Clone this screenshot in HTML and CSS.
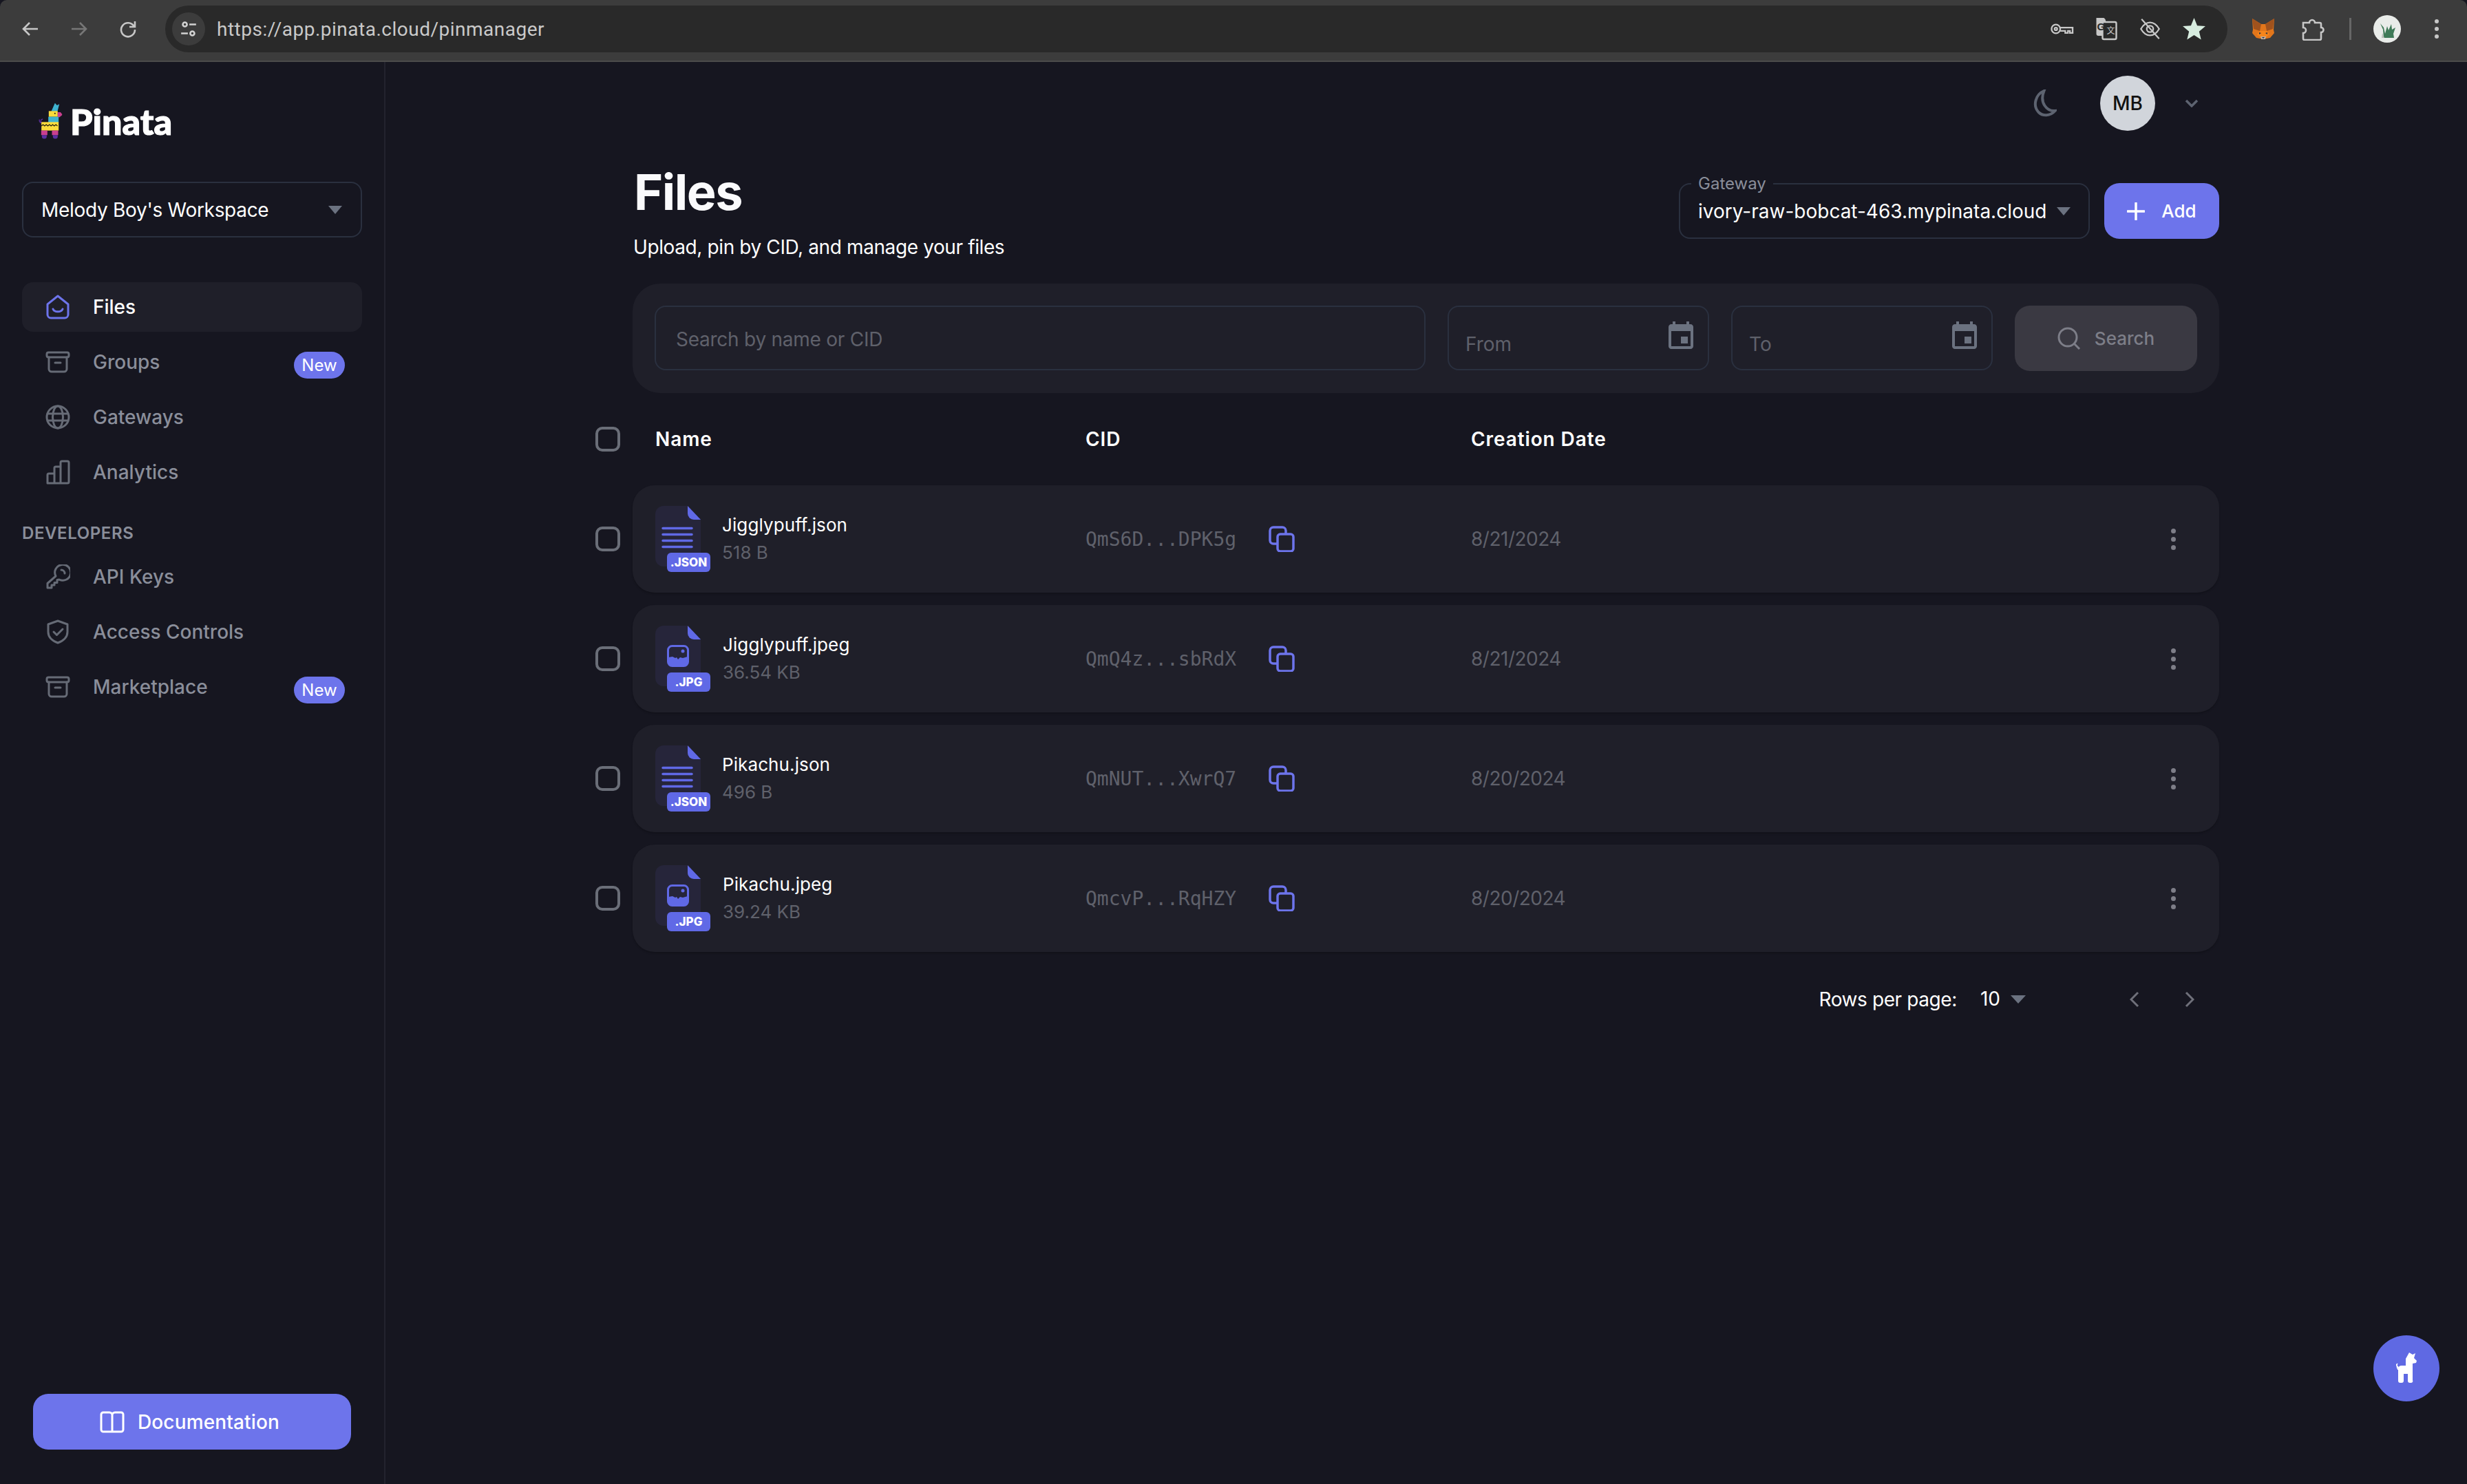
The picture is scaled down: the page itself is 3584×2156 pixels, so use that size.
FILE: index.html
```html
<!DOCTYPE html>
<html lang="en">
    <head>
        <meta charset="UTF-8">
        <meta name="viewport" content="width=device-width, initial-scale=1.0">
        <title>Pinata - Files</title>
        <link rel="stylesheet" href="styles.css">
    </head>
    <body>
        <svg class="defs" width="0" height="0">
            <symbol id="i-box" viewBox="0 0 36 36"><rect x="2" y="4" width="32" height="7" rx="2.5"/><path d="M5 11v17a4 4 0 0 0 4 4h18a4 4 0 0 0 4-4V11M14 19h8"/></symbol>
            <symbol id="i-copy" viewBox="0 0 38 38"><path d="M25 12V7a5 5 0 0 0-5-5H7a5 5 0 0 0-5 5v14a5 5 0 0 0 5 5h5"/><rect x="13" y="12" width="23" height="25" rx="4"/></symbol>
            <symbol id="i-event" viewBox="0 0 24 24"><path d="M17 12h-5v5h5v-5zM16 1v2H8V1H6v2H5c-1.110 0-1.990.9-1.990 2L3 19c0 1.100.89 2 2 2h14c1.100 0 2-.9 2-2V5c0-1.100-.9-2-2-2h-1V1h-2zm3 18H5V8h14v11z"/></symbol>
            <symbol id="i-doc" viewBox="0 0 66 88"><path fill="#26253a" d="M12 0h34l20 20v56a12 12 0 0 1-12 12H12A12 12 0 0 1 0 76V12A12 12 0 0 1 12 0z"/><path fill="#6069e6" d="M47 0l19 20H56a9 9 0 0 1-9-9z"/></symbol>
            <symbol id="i-img" viewBox="0 0 32 32"><rect x="1.500" y="1.500" width="29" height="29" rx="6" fill="none" stroke="#6069e6" stroke-width="3"/><path fill="#6069e6" d="M2 18l6-1 4 2 2-1 2 3 3-3 4 1 7-2v9a5 5 0 0 1-5 5H7a5 5 0 0 1-5-5z"/><circle cx="23" cy="9" r="2.500" fill="#6069e6"/></symbol>
            <symbol id="i-lines" viewBox="0 0 46 32"><path d="M2 2.500h42M2 11.500h42M2 20.500h42M2 29.500h42" fill="none" stroke="#6069e6" stroke-width="3.500" stroke-linecap="round"/></symbol>
        </svg>

        <header class="toolbar">
            <svg class="tb-icon" viewBox="0 0 28 28"><path d="M25 14H4M13 5l-9 9 9 9"/></svg>
            <svg class="tb-icon tb-icon--off" viewBox="0 0 28 28"><path d="M3 14h21M15 5l9 9-9 9"/></svg>
            <svg class="tb-icon" viewBox="0 0 28 28"><path d="M22.500 10A10 10 0 1 0 24 15M24 3v8h-8"/></svg>
            <div class="omnibox">
                <span class="site-chip">
                    <svg viewBox="0 0 24 24"><circle cx="7" cy="6" r="2.800"/><path d="M13 6h9M2 18h9"/><circle cx="17" cy="18" r="2.800"/></svg>
                </span>
                <span class="url">https://app.pinata.cloud/pinmanager</span>
                <span class="omni-icons">
                    <svg viewBox="0 0 36 24"><circle cx="9" cy="12" r="6.500"/><circle cx="9" cy="12" r="2" /><path d="M15.500 10H34v8h-4v-3h-3v3h-4v-3h-7.500"/></svg>
                    <svg viewBox="0 0 34 34" class="translate"><path class="solid" d="M3 1h11l2 2 6 24H6a3 3 0 0 1-3-3z"/><rect class="outline" x="12" y="7" width="20" height="25" rx="2"/><text x="4" y="19" class="tr-g">G</text><text x="18" y="24" class="tr-x">文</text></svg>
                    <svg viewBox="0 0 36 36"><path d="M4 18c4-7 9-10 14-10s10 3 14 10c-4 7-9 10-14 10S8 25 4 18z"/><circle cx="18" cy="18" r="5"/><path d="M5 3l27 30"/></svg>
                    <svg viewBox="0 0 32 32"><path class="star" d="M16 1l4.300 10.500 11.200.8-8.600 7.200 2.700 11L16 24.500 6.400 30.500l2.700-11L.5 12.300l11.200-.8z"/></svg>
                </span>
            </div>
            <div class="tb-right">
                <svg class="fox" viewBox="0 0 32 30"><path fill="#e2761b" d="M0 0l13 8h6L32 0l-1 16 1 5-6 7-5 1H11l-5-1-6-7 1-5z"/><path fill="#a0521d" d="M0 0l13 8-2 10-9-3zM32 0L19 8l2 10 9-3z"/><path fill="#f6851b" d="M11 18h10l4 5-5 4h-8l-5-4z"/><path fill="#c0ad9e" d="M12 26h8l-1 4h-6z"/><path fill="#233447" d="M10 20l3 1-3 2zM22 20l-3 1 3 2zM14 27h4l-2 2z"/></svg>
                <svg class="puzzle" viewBox="0 0 34 34"><path d="M3 8h9a4 4 0 0 1 8 0h7a2 2 0 0 1 2 2v5a3.500 3.500 0 0 1 0 7v9a2 2 0 0 1-2 2H5a2 2 0 0 1-2-2v-8a4 4 0 0 0 0-8z"/></svg>
                <span class="tb-sep"></span>
                <span class="profile">
                    <svg viewBox="0 0 40 40"><circle cx="20" cy="20" r="20" fill="#e9ece9"/><path fill="#3f7a58" d="M10 12l5 6 2 9 3-11 2 6 4-9 1 8 5-3-3 9 1 6H15l-1-12z"/><path fill="#b9bdb9" d="M13 26l3 7h-4z"/></svg>
                </span>
                <span class="kebab"><i></i><i></i><i></i></span>
            </div>
        </header>

        <div class="app">
            <aside class="sidebar">
                <div class="logo">
                    <svg class="llama" viewBox="45 55 110 165">
                        <path fill="none" stroke="#5b2fa0" stroke-width="4" d="M62 150c-8-10-6-18 4-20M58 148c-7-6-8-12-6-16"/>
                        <path fill="#3fb3d0" d="M103 96l16-36 9 10 10-5-8 31z"/>
                        <rect fill="#fbdc3c" x="92" y="95" width="39" height="25"/>
                        <path fill="#c93f8f" d="M131 100h12l7 8v5l-11 9h-8z"/>
                        <circle cx="119" cy="105" r="3" fill="#1a1a1a"/>
                        <rect fill="#3fb3d0" x="90" y="120" width="45" height="25"/>
                        <rect fill="#fbdc3c" x="60" y="143" width="75" height="37"/>
                        <path fill="none" stroke="#1d1a10" stroke-width="3.500" d="M60 160l7-6 7 6 7-6 7 6 7-6 7 6 7-6 7 6 7-6 7 6"/>
                        <rect fill="#c93f8f" x="59" y="180" width="27" height="20"/>
                        <rect fill="#c93f8f" x="106" y="180" width="27" height="20"/>
                        <path fill="#5b2fa0" d="M62 200h21v7a10 8 0 0 1-21 0zM110 200h21v7a10 8 0 0 1-21 0z"/>
                    </svg>
                    <span class="logo-word">Pinata</span>
                </div>

                <div class="select workspace">
                    <span>Melody Boy's Workspace</span>
                    <i class="caret"></i>
                </div>

                <nav class="nav">
                    <a class="nav-item active">
                        <svg class="nav-icon" viewBox="0 0 36 36"><path d="M3 14L18 2l15 12v15a5 5 0 0 1-5 5H8a5 5 0 0 1-5-5z"/><path d="M11 21c2 5 12 5 14 0"/></svg>
                        Files
                    </a>
                    <a class="nav-item">
                        <svg class="nav-icon"><use href="#i-box"/></svg>
                        Groups
                        <span class="badge">New</span>
                    </a>
                    <a class="nav-item">
                        <svg class="nav-icon" viewBox="0 0 36 36"><circle cx="18" cy="18" r="16"/><ellipse cx="18" cy="18" rx="7.500" ry="16"/><path d="M3 13h30M3 23h30"/></svg>
                        Gateways
                    </a>
                    <a class="nav-item">
                        <svg class="nav-icon" viewBox="0 0 36 36"><path d="M3 34V22a2 2 0 0 1 2-2h8V12a2 2 0 0 1 2-2h7V4a2 2 0 0 1 2-2h8a2 2 0 0 1 2 2v28a2 2 0 0 1-2 2zM13 20v14M22 10v24"/></svg>
                        Analytics
                    </a>
                </nav>

                <div class="nav-label">DEVELOPERS</div>

                <nav class="nav nav--dev">
                    <a class="nav-item">
                        <svg class="nav-icon" viewBox="0 0 36 36"><path d="M15 17a11.500 11.500 0 1 1 5 5l-3 .5v4h-4v3.500H9V34H3v-6.500z"/><path d="M23 8a5 5 0 0 1 5 5"/></svg>
                        API Keys
                    </a>
                    <a class="nav-item">
                        <svg class="nav-icon" viewBox="0 0 36 36"><path d="M18 2l14 5v11c0 8-6 13-14 16C10 31 4 26 4 18V7z"/><path d="M12 18l4.500 4.500L25 14"/></svg>
                        Access Controls
                    </a>
                    <a class="nav-item">
                        <svg class="nav-icon"><use href="#i-box"/></svg>
                        Marketplace
                        <span class="badge">New</span>
                    </a>
                </nav>

                <a class="docs-btn">
                    <svg viewBox="0 0 36 32"><path d="M5 2h9a4 4 0 0 1 4 4v24H5a3 3 0 0 1-3-3V5a3 3 0 0 1 3-3zM31 2h-9a4 4 0 0 0-4 4v24h13a3 3 0 0 0 3-3V5a3 3 0 0 0-3-3z"/></svg>
                    Documentation
                </a>
            </aside>

            <main class="main">
                <div class="topbar">
                    <svg class="moon" viewBox="2 1 36 40"><path d="M20 3C8 8 3 24 12 34c6 6 17 6 24-2C24 33 13 20 20 3z"/></svg>
                    <span class="avatar">MB</span>
                    <svg class="chev" viewBox="0 0 20 12"><path d="M2 2l8 8 8-8"/></svg>
                </div>

                <div class="page-head">
                    <div>
                        <h1>Files</h1>
                        <p class="subtitle">Upload, pin by CID, and manage your files</p>
                    </div>
                    <div class="page-actions">
                        <div class="select gateway">
                            <span class="legend">Gateway</span>
                            <span class="gateway-host">ivory-raw-bobcat-463.mypinata.cloud</span>
                            <i class="caret"></i>
                        </div>
                        <a class="add-btn">
                            <svg viewBox="0 0 26 26"><path d="M13 1v24M1 13h24"/></svg>
                            Add
                        </a>
                    </div>
                </div>

                <div class="filters">
                    <div class="field field--search">Search by name or CID</div>
                    <div class="field field--date">
                        <span>From</span>
                        <svg class="cal"><use href="#i-event"/></svg>
                    </div>
                    <div class="field field--date">
                        <span>To</span>
                        <svg class="cal"><use href="#i-event"/></svg>
                    </div>
                    <a class="search-btn">
                        <svg viewBox="0 0 34 34"><circle cx="15" cy="15" r="13"/><path d="M24.500 24.500L32 32"/></svg>
                        Search
                    </a>
                </div>

                <div class="file-line file-line--head">
                    <span class="check"></span>
                    <div class="cols cols--head">
                        <span class="cell-name">Name</span>
                        <span>CID</span>
                        <span>Creation Date</span>
                    </div>
                </div>

                <div class="file-list">
                    <div class="file-line">
                        <span class="check"></span>
                        <div class="cols file-row">
                            <div class="cell-name">
                                <div class="file-icon">
                                    <svg class="doc"><use href="#i-doc"/></svg>
                                    <svg class="glyph-lines"><use href="#i-lines"/></svg>
                                    <span class="ext">.JSON</span>
                                </div>
                                <div>
                                    <div class="file-name">Jigglypuff.json</div>
                                    <div class="file-size">518 B</div>
                                </div>
                            </div>
                            <div class="cid">QmS6D...DPK5g <svg class="copy"><use href="#i-copy"/></svg></div>
                            <div class="date">8/21/2024</div>
                            <span class="dots"><i></i><i></i><i></i></span>
                        </div>
                    </div>
                    <div class="file-line">
                        <span class="check"></span>
                        <div class="cols file-row">
                            <div class="cell-name">
                                <div class="file-icon file-icon--img">
                                    <svg class="doc"><use href="#i-doc"/></svg>
                                    <svg class="glyph-img"><use href="#i-img"/></svg>
                                    <span class="ext">.JPG</span>
                                </div>
                                <div>
                                    <div class="file-name">Jigglypuff.jpeg</div>
                                    <div class="file-size">36.54 KB</div>
                                </div>
                            </div>
                            <div class="cid">QmQ4z...sbRdX <svg class="copy"><use href="#i-copy"/></svg></div>
                            <div class="date">8/21/2024</div>
                            <span class="dots"><i></i><i></i><i></i></span>
                        </div>
                    </div>
                    <div class="file-line">
                        <span class="check"></span>
                        <div class="cols file-row">
                            <div class="cell-name">
                                <div class="file-icon">
                                    <svg class="doc"><use href="#i-doc"/></svg>
                                    <svg class="glyph-lines"><use href="#i-lines"/></svg>
                                    <span class="ext">.JSON</span>
                                </div>
                                <div>
                                    <div class="file-name">Pikachu.json</div>
                                    <div class="file-size">496 B</div>
                                </div>
                            </div>
                            <div class="cid">QmNUT...XwrQ7 <svg class="copy"><use href="#i-copy"/></svg></div>
                            <div class="date">8/20/2024</div>
                            <span class="dots"><i></i><i></i><i></i></span>
                        </div>
                    </div>
                    <div class="file-line">
                        <span class="check"></span>
                        <div class="cols file-row">
                            <div class="cell-name">
                                <div class="file-icon file-icon--img">
                                    <svg class="doc"><use href="#i-doc"/></svg>
                                    <svg class="glyph-img"><use href="#i-img"/></svg>
                                    <span class="ext">.JPG</span>
                                </div>
                                <div>
                                    <div class="file-name">Pikachu.jpeg</div>
                                    <div class="file-size">39.24 KB</div>
                                </div>
                            </div>
                            <div class="cid">QmcvP...RqHZY <svg class="copy"><use href="#i-copy"/></svg></div>
                            <div class="date">8/20/2024</div>
                            <span class="dots"><i></i><i></i><i></i></span>
                        </div>
                    </div>
                </div>

                <div class="pager">
                    <span class="pager-label">Rows per page:</span>
                    <span class="page-size">10</span>
                    <i class="caret"></i>
                    <svg class="pager-arrow first" viewBox="0 0 14 24"><path d="M12 2L2 12l10 10"/></svg>
                    <svg class="pager-arrow" viewBox="0 0 14 24"><path d="M2 2l10 10L2 22"/></svg>
                </div>
            </main>
        </div>

        <a class="help-btn">
            <svg viewBox="0 0 30 46"><path fill="#fff" d="M19 0l5 3 4-2-2 7 4 4-1 3-5 1v24a3 3 0 0 1-2 4h-2a3 3 0 0 1-3-3V31H11v10a3 3 0 0 1-3 3H6a3 3 0 0 1-3-3V23c0-2 2-4 5-4h6V9z"/><path fill="none" stroke="#fff" stroke-width="1.500" d="M3 25c-2-4-3-7-1-9M4 22c-3-2-4-4-3-5"/></svg>
        </a>
    </body>
</html>
```

FILE: styles.css
```css
:root {
    --bg: #161620;
    --panel: #1f1f29;
    --line: #2a303f;
    --accent: #6d74eb;
    --muted: #8a8e9a;
    --dim: #5f616b;
}
* {
    box-sizing: border-box;
}
html,
body {
    height: 100%;
}
body {
    margin: 0;
    background: var(--bg);
    color: #fff;
    font-family: Inter, "Liberation Sans", sans-serif;
    font-size: 28px;
    overflow: hidden;
}
.defs {
    position: absolute;
}
i {
    display: block;
}

/* browser chrome */
.toolbar {
    height: 90px;
    display: flex;
    align-items: center;
    background: #3c3c3c;
    border-bottom: 2px solid #4b4b4b;
    border-radius: 10px 10px 0 0;
    padding: 0 0 4px 30px;
}
.tb-icon {
    width: 28px;
    height: 28px;
    margin-right: 43px;
    fill: none;
    stroke: #c7c7c7;
    stroke-width: 2.6;
}
.tb-icon--off {
    stroke: #777;
}
.omnibox {
    width: 2996px;
    height: 68px;
    margin-left: -3px;
    display: flex;
    align-items: center;
    background: #292929;
    border-radius: 34px;
    padding: 0 10px;
}
.site-chip {
    width: 48px;
    height: 48px;
    display: flex;
    align-items: center;
    justify-content: center;
    background: #3c3c3c;
    border-radius: 50%;
}
.site-chip svg {
    width: 26px;
    height: 26px;
    fill: none;
    stroke: #d2d2d2;
    stroke-width: 2.4;
}
.url {
    margin-left: 17px;
    font-family: Roboto, "Liberation Sans", sans-serif;
    font-size: 28px;
    color: #c9c9c9;
    letter-spacing: 0.5px;
}
.omni-icons {
    margin-left: auto;
    margin-right: 21px;
    display: flex;
    align-items: center;
    gap: 29px;
}
.omni-icons svg {
    width: 35px;
    height: 34px;
    fill: none;
    stroke: #c7c7c7;
    stroke-width: 2.4;
}
.omni-icons .star {
    fill: #d7ecdf;
    stroke: none;
}
.translate .solid {
    fill: #c7c7c7;
    stroke: none;
}
.translate .outline {
    fill: #292929;
}
.tr-g,
.tr-x {
    fill: #292929;
    stroke: none;
    font: 700 15px "Liberation Sans", sans-serif;
}
.tr-x {
    fill: #c7c7c7;
    font: 12px "Noto Sans CJK SC", sans-serif;
}
.tb-right {
    flex: 1;
    display: flex;
    align-items: center;
    padding-left: 36px;
}
.fox {
    width: 32px;
    height: 30px;
}
.puzzle {
    width: 34px;
    height: 34px;
    margin-left: 39px;
    fill: none;
    stroke: #c7c7c7;
    stroke-width: 2.6;
}
.tb-sep {
    width: 3px;
    height: 32px;
    margin-left: 36px;
    background: #666;
}
.profile {
    margin-left: 32px;
    width: 40px;
    height: 40px;
}
.profile svg {
    display: block;
    width: 40px;
    height: 40px;
}
.kebab {
    margin-left: 49px;
    display: flex;
    flex-direction: column;
    gap: 5px;
}
.kebab i {
    width: 6px;
    height: 6px;
    border-radius: 50%;
    background: #c7c7c7;
}

/* page */
.app {
    display: flex;
    height: 2066px;
}
.sidebar {
    width: 560px;
    flex: none;
    display: flex;
    flex-direction: column;
    border-right: 2px solid #23232e;
    padding: 58px 32px 50px 32px;
}
.logo {
    height: 55px;
    display: flex;
    align-items: center;
    gap: 10px;
    padding-left: 23px;
}
.llama {
    width: 37px;
    height: 55px;
}
.logo-word {
    font-family: Lato, sans-serif;
    font-weight: 900;
    font-size: 52px;
    line-height: 55px;
    margin-top: 2px;
    -webkit-text-stroke: 1.2px #fff;
}
.select {
    position: relative;
    display: flex;
    align-items: center;
    justify-content: space-between;
    border: 2px solid var(--line);
    border-radius: 16px;
}
.workspace {
    height: 81px;
    margin-top: 61px;
    padding: 0 27px 0 26px;
    letter-spacing: -0.3px;
}
.caret {
    width: 0;
    height: 0;
    flex: none;
    border-left: 10px solid transparent;
    border-right: 10px solid transparent;
    border-top: 12px solid #6b7280;
}
.nav {
    margin-top: 65px;
    display: flex;
    flex-direction: column;
    gap: 8px;
}
.nav--dev {
    margin-top: 12px;
}
.nav-item {
    height: 72px;
    display: flex;
    align-items: center;
    gap: 33px;
    padding: 0 25px 0 34px;
    border-radius: 16px;
    color: var(--muted);
    font-weight: 500;
}
.nav-item.active {
    background: var(--panel);
    color: #fff;
}
.nav-icon {
    width: 36px;
    height: 36px;
    flex: none;
    fill: none;
    stroke: #666b76;
    stroke-width: 3;
    stroke-linejoin: round;
    stroke-linecap: round;
}
.active .nav-icon {
    stroke: var(--accent);
}
.badge {
    margin-left: auto;
    margin-top: 8px;
    width: 74px;
    height: 39px;
    border-radius: 20px;
    background: var(--accent);
    color: #fff;
    font-size: 24px;
    font-weight: 400;
    line-height: 39px;
    text-align: center;
}
.nav-label {
    margin-top: 38px;
    height: 30px;
    line-height: 30px;
    font-size: 24px;
    font-weight: 600;
    color: var(--muted);
    letter-spacing: 0.6px;
}
.docs-btn {
    margin: auto 16px 0;
    height: 81px;
    display: flex;
    align-items: center;
    justify-content: center;
    gap: 19px;
    padding-right: 7px;
    background: var(--accent);
    border-radius: 22px;
    font-weight: 500;
    letter-spacing: 0.15px;
}
.docs-btn svg {
    width: 36px;
    height: 32px;
    fill: none;
    stroke: #fff;
    stroke-width: 3;
}

.main {
    flex: 1;
    padding: 20px 360px 0 359px;
}
.topbar {
    height: 80px;
    display: flex;
    align-items: center;
    justify-content: flex-end;
    padding-right: 30px;
}
.moon {
    width: 37px;
    height: 40px;
    fill: none;
    stroke: #5d6370;
    stroke-width: 4;
}
.avatar {
    width: 80px;
    height: 80px;
    margin-left: 63px;
    border-radius: 50%;
    background: #d1d5db;
    color: #111;
    font-weight: 500;
    line-height: 80px;
    text-align: center;
}
.chev {
    width: 20px;
    height: 12px;
    margin-left: 43px;
    fill: none;
    stroke: #5d6370;
    stroke-width: 3.500;
}
.page-head {
    margin-top: 49px;
    display: flex;
    justify-content: space-between;
}
h1 {
    margin: 0;
    font-size: 72px;
    font-weight: 700;
    line-height: 80px;
    color: #fafafc;
    letter-spacing: -1.5px;
    padding-left: 2px;
}
.subtitle {
    margin: 20px 0 0;
    line-height: 40px;
    letter-spacing: -0.39px;
    padding-left: 1px;
}
.page-actions {
    padding-top: 27px;
    display: flex;
    gap: 21px;
}
.gateway {
    width: 597px;
    height: 81px;
    padding: 0 26px;
}
.gateway-host {
    white-space: nowrap;
}
.gateway .caret {
    margin-left: 15px;
}
.legend {
    position: absolute;
    left: 16px;
    top: -15px;
    padding: 0 10px;
    background: var(--bg);
    color: var(--muted);
    font-size: 24px;
    font-weight: 400;
    line-height: 28px;
}
.add-btn {
    width: 167px;
    height: 81px;
    display: flex;
    align-items: center;
    justify-content: center;
    gap: 24px;
    background: var(--accent);
    border-radius: 22px;
    font-size: 26px;
    font-weight: 500;
}
.add-btn svg {
    width: 26px;
    height: 26px;
    fill: none;
    stroke: #fff;
    stroke-width: 3.500;
    stroke-linecap: round;
}
.filters {
    margin-top: 33px;
    height: 159px;
    padding: 32px;
    display: flex;
    gap: 32px;
    background: var(--panel);
    border-radius: 40px;
}
.field {
    height: 94px;
    border: 2px solid var(--line);
    border-radius: 16px;
    color: var(--dim);
    display: flex;
    align-items: center;
}
.field--search {
    flex: 1;
    padding: 3px 0 0 29px;
    letter-spacing: -0.25px;
}
.field--date {
    width: 380px;
    justify-content: space-between;
    padding: 0 15px 0 24px;
}
.field--date span {
    margin-top: 18px;
}
.cal {
    width: 48px;
    height: 48px;
    margin-top: -4px;
    fill: #6b7280;
}
.search-btn {
    width: 265px;
    height: 95px;
    display: flex;
    align-items: center;
    justify-content: center;
    gap: 20px;
    background: #3a3942;
    border-radius: 22px;
    color: #7d7e88;
    font-size: 26px;
    font-weight: 500;
}
.search-btn svg {
    width: 34px;
    height: 34px;
    fill: none;
    stroke: #7d7e88;
    stroke-width: 3;
}
.file-line {
    margin-left: -54px;
    display: flex;
    align-items: center;
    gap: 18px;
}
.file-line--head {
    margin-top: 37px;
    height: 60px;
}
.check {
    width: 36px;
    height: 36px;
    flex: none;
    border: 4px solid #6a6e78;
    border-radius: 10px;
}
.cols {
    flex: 1;
    display: grid;
    grid-template-columns: 658px 560px 1fr 70px;
    align-items: center;
}
.cols--head {
    font-weight: 600;
    letter-spacing: 0.9px;
}
.cols--head .cell-name {
    padding-left: 33px;
}
.file-list {
    margin-top: 37px;
    display: flex;
    flex-direction: column;
    gap: 18px;
}
.file-row {
    height: 156px;
    background: var(--panel);
    border-radius: 32px;
    box-shadow: 0 2px 3px rgba(0, 0, 0, 0.2);
}
.cell-name {
    display: flex;
    align-items: center;
    padding-left: 33px;
}
.file-icon {
    position: relative;
    width: 80px;
    height: 96px;
    margin-right: 17px;
}
.file-icon--img {
    margin-right: 18px;
}
.doc {
    position: absolute;
    left: 0;
    top: 0;
    width: 66px;
    height: 88px;
}
.glyph-lines {
    position: absolute;
    left: 9px;
    top: 30px;
    width: 46px;
    height: 32px;
}
.glyph-img {
    position: absolute;
    left: 17px;
    top: 28px;
    width: 32px;
    height: 32px;
}
.ext {
    position: absolute;
    left: 17px;
    top: 68px;
    width: 63px;
    height: 28px;
    background: #6069e6;
    border-radius: 6px;
    font-size: 17px;
    font-weight: 800;
    line-height: 28px;
    text-align: center;
}
.file-name {
    font-size: 26px;
    line-height: 34px;
    letter-spacing: 0.1px;
}
.file-size {
    margin-top: 6px;
    font-size: 26px;
    line-height: 34px;
    color: var(--dim);
}
.cid {
    display: flex;
    align-items: center;
    gap: 47px;
    font-family: "DejaVu Sans Mono", "Liberation Mono", monospace;
    font-size: 28px;
    color: var(--dim);
}
.copy {
    width: 38px;
    height: 38px;
    fill: none;
    stroke: var(--accent);
    stroke-width: 3.500;
}
.date {
    color: var(--dim);
    letter-spacing: -0.5px;
}
.dots {
    display: flex;
    flex-direction: column;
    gap: 5px;
}
.dots i {
    width: 7px;
    height: 7px;
    border-radius: 50%;
    background: #7e7e88;
}
.pager {
    margin-top: 49px;
    height: 40px;
    display: flex;
    align-items: center;
    justify-content: flex-end;
    padding-right: 36px;
}
.pager-label {
    letter-spacing: -0.4px;
}
.page-size {
    margin-left: 34px;
    margin-right: 15px;
    margin-top: -2px;
}
.pager .caret {
    border-left-width: 11px;
    border-right-width: 11px;
}
.pager-arrow {
    width: 14px;
    height: 24px;
    margin-left: 66px;
    fill: none;
    stroke: #6f707a;
    stroke-width: 3;
}
.pager-arrow.first {
    margin-left: 151px;
}
.help-btn {
    position: fixed;
    left: 3448px;
    top: 1940px;
    width: 96px;
    height: 96px;
    display: flex;
    align-items: center;
    justify-content: center;
    background: #5f69e3;
    border-radius: 50%;
}
.help-btn svg {
    width: 30px;
    height: 46px;
}
```
